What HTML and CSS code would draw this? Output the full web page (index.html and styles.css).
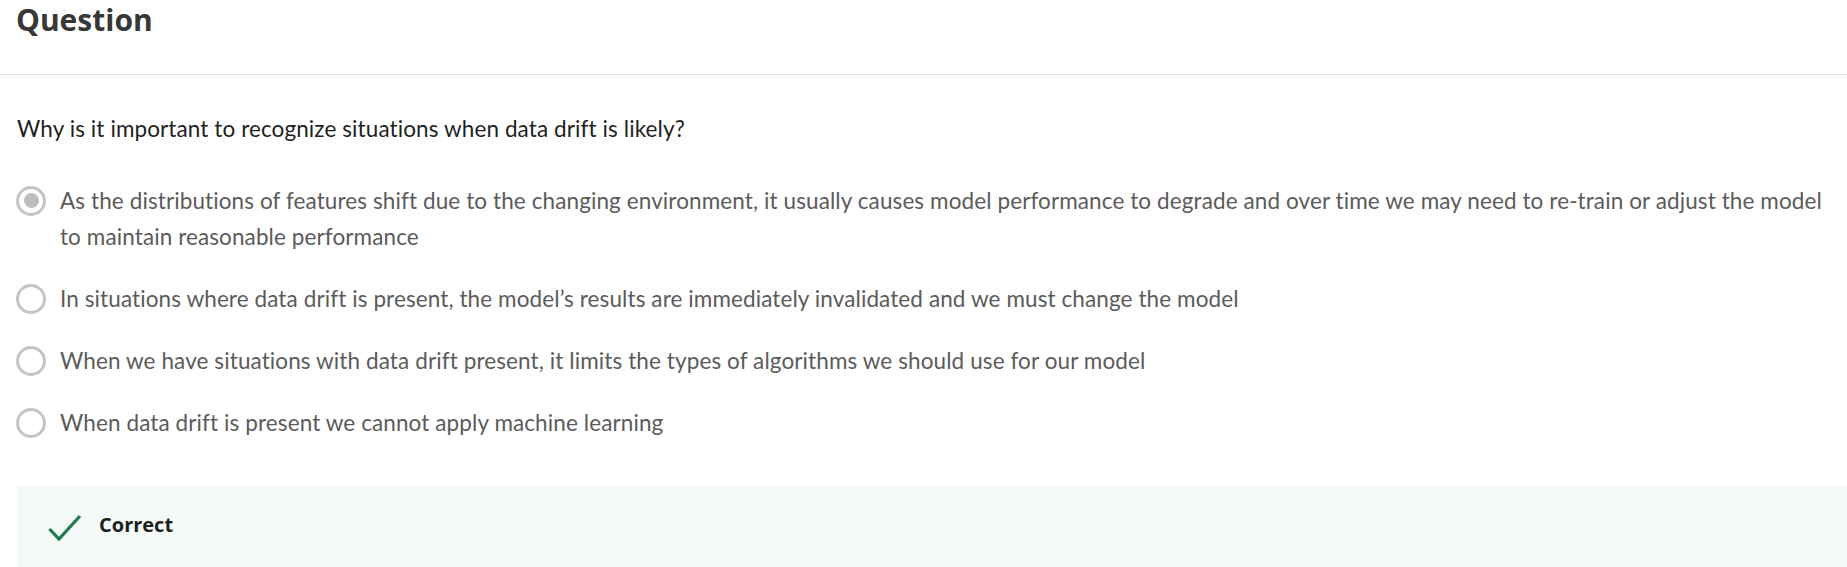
FILE: index.html
```html
<!DOCTYPE html>
<html lang="en">
<head>
<meta charset="utf-8">
<title>Question</title>
<link rel="stylesheet" href="styles.css">
</head>
<body>
<div class="page">
  <header class="header">
    <h2 class="title">Question</h2>
  </header>
  <div class="content">
    <p class="prompt">Why is it important to recognize situations when data drift is likely?</p>
    <div class="options">
      <label class="option">
        <span class="radio radio-checked"><span class="dot"></span></span>
        <span class="option-text">As the distributions of features shift due to the changing environment, it usually causes model performance to degrade and over time we may need to re-train or adjust the model to maintain reasonable performance</span>
      </label>
      <label class="option">
        <span class="radio"></span>
        <span class="option-text">In situations where data drift is present, the model’s results are immediately invalidated and we must change the model</span>
      </label>
      <label class="option">
        <span class="radio"></span>
        <span class="option-text">When we have situations with data drift present, it limits the types of algorithms we should use for our model</span>
      </label>
      <label class="option">
        <span class="radio"></span>
        <span class="option-text">When data drift is present we cannot apply machine learning</span>
      </label>
    </div>
    <div class="feedback">
      <svg class="check" width="34" height="27" viewBox="0 0 34 27" aria-hidden="true">
        <polyline points="1.5,15 11,25 32,2" fill="none" stroke="#1f7a4d" stroke-width="3.2" stroke-linecap="butt" stroke-linejoin="miter"/>
      </svg>
      <span class="feedback-label">Correct</span>
    </div>
  </div>
</div>
</body>
</html>
```

FILE: styles.css
```css
html, body {
  margin: 0;
  padding: 0;
  background: #ffffff;
}

.page {
  font-family: Lato, "Noto Sans", sans-serif;
}

.header {
  height: 74px;
  border-bottom: 1px solid #e1e1e1;
  padding: 0 16px;
  box-sizing: content-box;
}

.title {
  margin: 0;
  font-family: "Open Sans", sans-serif;
  font-weight: 700;
  font-size: 30px;
  line-height: 40px;
  color: #373737;
}

.content {
  padding: 35.5px 12px 0 17px;
}

.prompt {
  margin: 0 0 36px 0;
  font-size: 22.5px;
  letter-spacing: 0.1px;
  line-height: 36px;
  color: #1f1f1f;
}

.options {
  display: flex;
  flex-direction: column;
  gap: 26px;
}

.option {
  display: flex;
  align-items: flex-start;
  gap: 14px;
  margin-left: -1px;
}

.radio {
  flex: 0 0 auto;
  width: 30px;
  height: 30px;
  margin-top: 3px;
  box-sizing: border-box;
  border: 3px solid #c4c4c4;
  border-radius: 50%;
  display: flex;
  align-items: center;
  justify-content: center;
}

.dot {
  width: 15px;
  height: 15px;
  border-radius: 50%;
  background: #bdbdbd;
}

.option-text {
  font-size: 22.5px;
  letter-spacing: 0.1px;
  line-height: 36px;
  color: #5b5b5b;
}

.feedback {
  margin-top: 45.5px;
  margin-right: -12px;
  height: 90px;
  background: #f5f9f8;
  display: flex;
  align-items: flex-start;
  padding: 28px 0 0 31px;
  gap: 17px;
}

.check {
  flex: 0 0 auto;
}

.feedback-label {
  font-family: "Open Sans", sans-serif;
  font-weight: 700;
  font-size: 20px;
  line-height: 30px;
  margin-top: -4px;
  color: #1f1f1f;
}
```
